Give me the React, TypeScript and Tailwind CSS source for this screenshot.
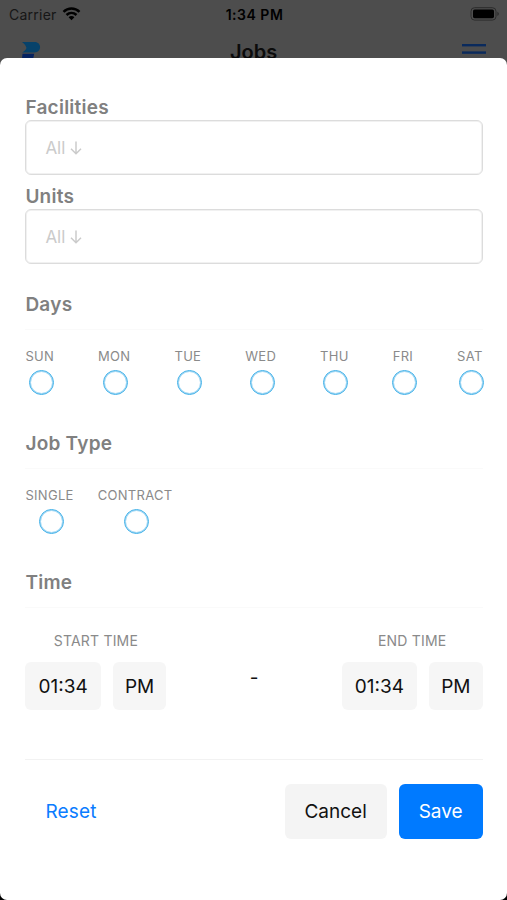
import { useState } from "react";

const DAYS = ["SUN", "MON", "TUE", "WED", "THU", "FRI", "SAT"];
const JOB_TYPES = ["SINGLE", "CONTRACT"];

function StatusBar() {
  return (
    <div className="flex h-7 shrink-0 items-center justify-between pl-[9px] pr-[7px] text-black">
      <div className="flex w-[120px] items-center gap-[5px] text-[14px] tracking-[0.25px] text-[#161616]">
        Carrier
        <svg width="19" height="14" viewBox="0 0 18 14" fill="none" stroke="#000" strokeWidth="2.5">
          <path d="M1 4.9C5.6.5 12.4.5 17 4.9" />
          <path d="M4 8C6.9 5.3 11.1 5.3 14 8" />
          <path d="M6.1 10.2C7.7 8.7 10.3 8.7 11.9 10.2L9 13.2Z" fill="#000" stroke="none" />
        </svg>
      </div>
      <div className="text-[14px] font-semibold tracking-[0.5px]">1:34 PM</div>
      <div className="flex w-[120px] justify-end">
        <svg width="30" height="14" viewBox="0 0 30 14">
          <rect x="1" y="0.7" width="25" height="12.4" rx="3.6" fill="none" stroke="#2c2c2c" />
          <rect x="3" y="2.6" width="21" height="8.6" rx="1.6" fill="#000" />
          <path d="M27.4 4.8C29.4 5.6 29.4 8.2 27.4 9Z" fill="#2c2c2c" />
        </svg>
      </div>
    </div>
  );
}

function NavBar() {
  return (
    <div className="flex h-12 shrink-0 items-center justify-between pl-[21px] pr-[21px]">
      <svg width="24" height="24" viewBox="0 0 24 24">
        <path d="M1 2H13.5C21 2 21 12.4 13.5 12.4H1.2C4.5 10.5 6 8.7 5.2 7C4.6 5.2 3.2 3.5 1 2Z" fill="#07426a" />
        <path d="M1.5 13.8H13.2L11 24H.5Z" fill="#052260" />
      </svg>
      <div className="text-[20px] font-semibold leading-6 text-[#0b0b0b]">Jobs</div>
      <svg width="24" height="20" viewBox="0 0 24 20" fill="#0a2a5c">
        <rect y="2" width="24" height="2.4" />
        <rect y="9.4" width="24" height="2.4" />
        <rect y="16.8" width="24" height="2.4" />
      </svg>
    </div>
  );
}

function SelectField({ label }: { label: string }) {
  return (
    <div>
      <div className="h-[25px] text-[19px] font-semibold leading-[26px] tracking-[0.25px] text-[#808080]">{label}</div>
      <button className="flex h-[55px] w-full items-center rounded-[6px] border border-[#dcdcdc] pl-[19px] pt-[2px] text-[17px] text-[#cbcbcb] shadow-[inset_0_0_0_1px_#f1f1f1]">
        All
        <svg className="mb-px ml-[5px]" width="12" height="14" viewBox="0 0 12 14" fill="none" stroke="currentColor" strokeWidth="1.5">
          <path d="M6 .5V12.5M1 7.8L6 12.7L11 7.8" />
        </svg>
      </button>
    </div>
  );
}

function SectionTitle({ title }: { title: string }) {
  return (
    <div className="h-[38px] border-b border-[#fafafa] text-[19px] font-semibold leading-[26px] tracking-[0.25px] text-[#808080]">
      {title}
    </div>
  );
}

function RadioOption({ label, on, onClick }: { label: string; on: boolean; onClick: () => void }) {
  return (
    <button onClick={onClick} className="flex flex-col items-center">
      <span className="text-[13px] leading-[18px] tracking-[0.3px] text-[#8a8a8a]">{label}</span>
      {/* negative margins keep the circle from widening short labels */}
      <span
        className={
          "-mr-2 -ml-[5px] mt-[5px] size-[25px] rounded-full border border-[#3dafe8] shadow-[inset_0_0_0_1px_#a3d8f4] " +
          (on ? "bg-[#3dafe8]" : "")
        }
      />
    </button>
  );
}

function TimePicker({ label }: { label: string }) {
  return (
    <div className="flex flex-col items-center">
      <div className="text-[14px] leading-[20px] tracking-[0.2px] text-[#8a8a8a]">{label}</div>
      <div className="mt-[11px] flex gap-3 text-[19px] text-[#111]">
        <button className="h-12 w-[75.5px] rounded-[6px] bg-[#f6f6f6] pt-[2px]">01:34</button>
        <button className="h-12 w-[53.5px] rounded-[6px] bg-[#f6f6f6] pt-[2px]">PM</button>
      </div>
    </div>
  );
}

export default function App() {
  const [selected, setSelected] = useState<string[]>([]);

  function toggle(name: string) {
    setSelected((prev) => (prev.includes(name) ? prev.filter((n) => n !== name) : [...prev, name]));
  }

  return (
    <div className="flex h-[900px] w-[507px] flex-col overflow-hidden bg-[#4d4d4d] font-['Inter',sans-serif]">
      <div className="h-[58px] shrink-0 overflow-hidden">
        <StatusBar />
        <NavBar />
      </div>

      {/* Filter sheet */}
      <div className="flex-1 bg-linear-to-b from-[#4d4d4d] from-50% to-black to-50%">
        <div className="h-full rounded-[7px] bg-white pl-[25.4px] pr-[24.4px] pt-[37px]">
          <SelectField label="Facilities" />
          <div className="mt-[9px]">
            <SelectField label="Units" />
          </div>

          <div className="mt-[28px]">
            <SectionTitle title="Days" />
            <div className="mt-[17px] flex justify-between">
              {DAYS.map((d) => (
                <RadioOption key={d} label={d} on={selected.includes(d)} onClick={() => toggle(d)} />
              ))}
            </div>
          </div>

          <div className="mt-[36px]">
            <SectionTitle title="Job Type" />
            <div className="mt-[17px] flex gap-6">
              {JOB_TYPES.map((t) => (
                <RadioOption key={t} label={t} on={selected.includes(t)} onClick={() => toggle(t)} />
              ))}
            </div>
          </div>

          <div className="mt-[36px]">
            <SectionTitle title="Time" />
            <div className="mt-[23px] flex justify-between">
              <TimePicker label="START TIME" />
              <div className="pt-[35px] text-[19px] leading-[24px] text-[#111]">-</div>
              <TimePicker label="END TIME" />
            </div>
          </div>

          <div className="mt-[49px] flex items-center border-t border-[#f2f2f2] pt-6 text-[19px]">
            <button className="h-[55px] px-5 pt-[2px] tracking-[0.2px] text-[#0a7cff]">Reset</button>
            <button className="ml-auto h-[55px] w-[102px] rounded-[6px] bg-[#f4f4f4] pt-[2px] text-[#111]">Cancel</button>
            <button className="ml-3 h-[55px] w-[84px] rounded-[6px] bg-[#007aff] pt-[2px] text-white">Save</button>
          </div>
        </div>
      </div>
    </div>
  );
}
